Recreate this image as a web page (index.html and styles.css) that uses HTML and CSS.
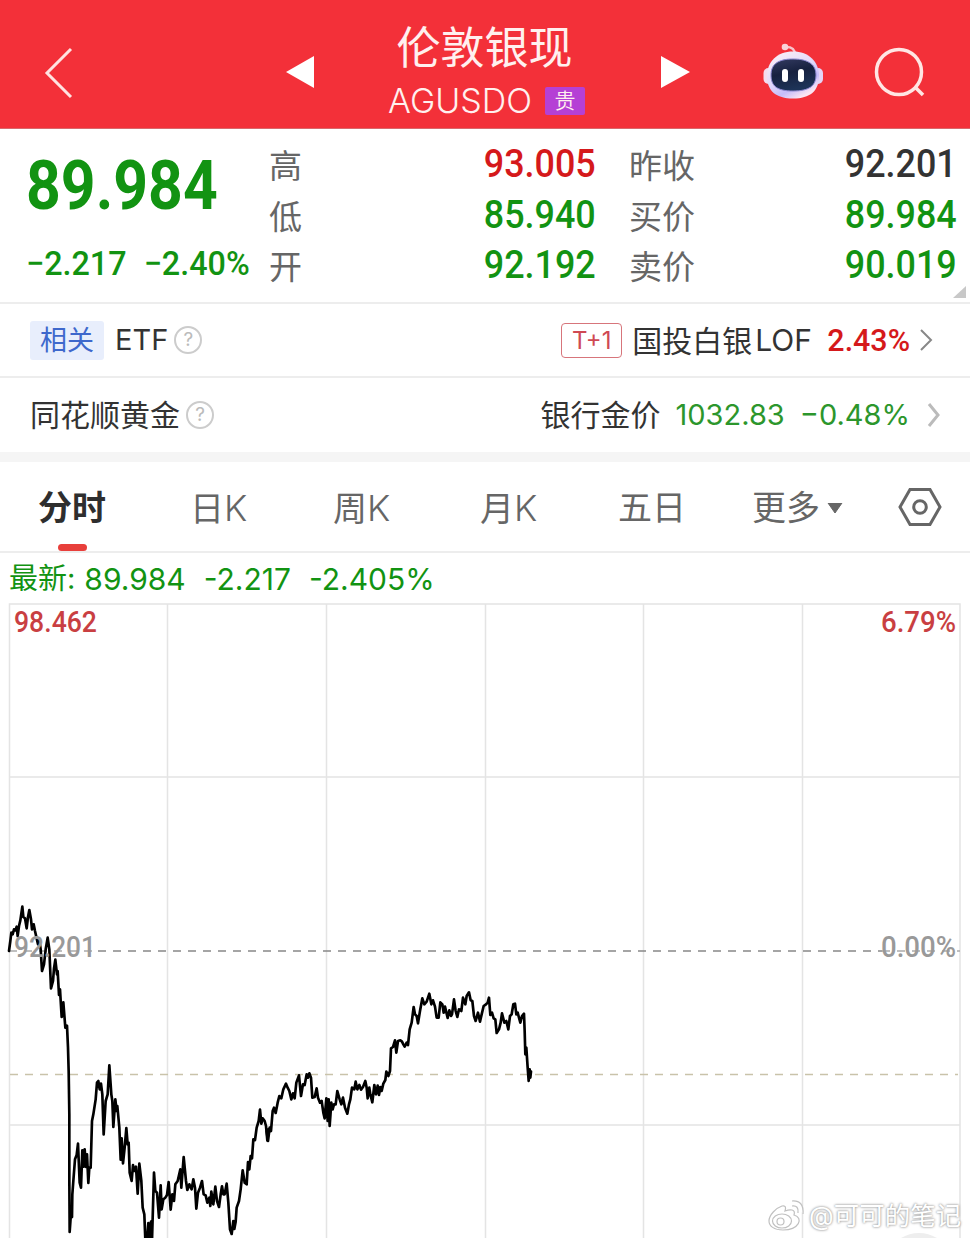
FILE: index.html
```html
<!DOCTYPE html>
<html lang="zh-CN">
<head>
    <meta charset="UTF-8">
    <title>伦敦银现 AGUSDO</title>
    <link rel="stylesheet" href="styles.css">
</head>
<body>

<header class="header">
    <svg class="back" width="30" height="52" viewBox="0 0 30 52"><path d="M27 2 L3 26 L27 50"/></svg>
    <svg class="prev" width="28" height="32" viewBox="0 0 28 32"><path d="M0 16 L28 0 V32 Z"/></svg>
    <div class="title">
        <h1>伦敦银现</h1>
        <div class="code"><span>AGUSDO</span><span class="badge">贵</span></div>
    </div>
    <svg class="next" width="29" height="32" viewBox="0 0 29 32"><path d="M0 0 L29 16 L0 32 Z"/></svg>
    <svg class="robot" width="62" height="58" viewBox="0 0 62 58">
        <defs>
            <linearGradient id="shell" x1="0" y1="0" x2="0.6" y2="1">
                <stop offset="0" stop-color="#fff2f6"/>
                <stop offset="0.55" stop-color="#e2d9fa"/>
                <stop offset="0.8" stop-color="#c5bcfa"/>
                <stop offset="1" stop-color="#fbe4f2"/>
            </linearGradient>
            <linearGradient id="visor" x1="0" y1="0" x2="0.3" y2="1">
                <stop offset="0" stop-color="#343b62"/>
                <stop offset="0.5" stop-color="#17213f"/>
                <stop offset="1" stop-color="#1d3357"/>
            </linearGradient>
        </defs>
        <path d="M23 4 C29 4 32 6 32 12" fill="none" stroke="#f7c3cc" stroke-width="2.500"/>
        <circle cx="22" cy="4" r="3.300" fill="#f9d3d9"/>
        <rect x="0.500" y="25" width="10" height="16" rx="5" fill="#f5dcee"/>
        <rect x="50" y="25" width="10" height="16" rx="5" fill="#e4d4f6"/>
        <path d="M30 8.500 C46 8.500 56 19 56 33 C56 48 47 55.500 30 55.500 C13 55.500 4 48 4 33 C4 19 14 8.500 30 8.500 Z" fill="url(#shell)"/>
        <path d="M30 16 C46 16 53 22 53 32 C53 43 46 48 30 48 C14 48 8 43 8 32 C8 22 14 16 30 16 Z" fill="url(#visor)" stroke="#8a86cf" stroke-width="1"/>
        <rect x="19" y="26" width="6" height="13" rx="3" fill="#fff"/>
        <rect x="35" y="26" width="6" height="13" rx="3" fill="#fff"/>
    </svg>
    <svg class="search" width="52" height="52" viewBox="0 0 52 52"><circle cx="25" cy="25" r="22.5"/><path d="M41 40 L49 48"/></svg>
</header>

<section class="quote">
    <div class="last">
        <div class="price num down">89.984</div>
        <div class="change down"><span class="num">−2.217</span><span class="num">−2.40%</span></div>
    </div>
    <dl class="stats first">
        <dt>高</dt><dd class="num up">93.005</dd>
        <dt>低</dt><dd class="num down">85.940</dd>
        <dt>开</dt><dd class="num down">92.192</dd>
    </dl>
    <dl class="stats second">
        <dt>昨收</dt><dd class="num">92.201</dd>
        <dt>买价</dt><dd class="num down">89.984</dd>
        <dt>卖价</dt><dd class="num down">90.019</dd>
    </dl>
    <svg class="expand" width="13" height="12" viewBox="0 0 13 12"><path d="M13 0 V12 H0 Z" fill="#c8c8c8"/></svg>
</section>

<section class="row">
    <span class="tag">相关</span>
    <span class="etf">ETF</span>
    <span class="help">?</span>
    <span class="t1">T+1</span>
    <span class="fund">国投白银</span>
    <span class="lof">LOF</span>
    <span class="num pct">2.43%</span>
    <svg class="arrow" width="14" height="24" viewBox="0 0 14 24"><path d="M2 2 L12 12 L2 22" stroke="#888" stroke-width="2"/></svg>
</section>

<section class="row gold">
    <span>同花顺黄金</span>
    <span class="help">?</span>
    <span class="bank">银行金价</span>
    <span class="gold-price">1032.83</span>
    <span class="gold-change">−0.48%</span>
    <svg class="arrow" width="14" height="26" viewBox="0 0 14 26"><path d="M2 2 L11 13 L2 24" stroke="#bbb" stroke-width="3"/></svg>
</section>

<nav class="tabs">
    <a class="active">分时</a>
    <a>日<i>K</i></a>
    <a>周<i>K</i></a>
    <a>月<i>K</i></a>
    <a>五日</a>
    <a class="more">更多<svg width="16" height="11" viewBox="0 0 16 11"><path d="M1 0 H15 L8 10 Z" fill="#666" stroke="#666"/></svg></a>
    <svg class="setting" width="44" height="40" viewBox="0 0 44 40"><path d="M12 2.500 H32 L42 20 L32 37.500 H12 L2 20 Z"/><circle cx="22" cy="20" r="6.300"/></svg>
</nav>

<div class="latest down"><span>最新:</span><span>89.984</span><span>-2.217</span><span>-2.405%</span></div>

<div class="chart">
    <svg width="970" height="637" viewBox="0 602 970 637">
        <g class="grid">
            <path d="M9.500 1240 V604 H960 V1240"/>
            <path d="M167.500 604 V1240 M326.500 604 V1240 M485.500 604 V1240 M643.500 604 V1240 M802.500 604 V1240"/>
            <path d="M9 777 H960 M9 1125 H960"/>
        </g>
        <path class="base-line" d="M98 951 H882"/>
        <path class="base-line faint" d="M9 951 H98 M882 951 H960"/>
        <path class="last-line" d="M10 1074.500 H958"/>

        <!-- price line, drawn at three units per pixel -->
        <g class="price-line" transform="translate(0 881) scale(0.33333)">
            <polyline points="27,210 31,180 34,155 38,160 42,145 46,148 50,137 53,165 57,135 61,118 67,77 70,108 75,112 80,142 84,108 88,87 93,115 96,145 101,130 105,150 110,172 114,190 118,175 122,205 126,270 132,250 137,205 143,170 148,205 153,322 159,300 162,262 166,236 171,280 173,270 177,342 180,325 185,408 190,364 196,440 201,434 204,500 206,570 208,700 208,900 209,1053 212,1010 216,1008 217,940 220,900 225,835 230,822 234,788 239,905 243,920 247,808 251,857 254,805 258,858 261,820 265,906 268,860 272,860 276,720 280,700 287,655 291,605 295,600 299,625 303,608 307,640 311,760 317,660 323,640 328,553 334,640 337,660 340,738 346,655 350,690 352,675 358,740 362,836 365,772 369,847 374,800 379,741 383,790 386,785 389,875 395,900 399,852 403,870 408,857 413,938 418,848 424,900 428,980 433,1000 436,1076 441,1080 445,1026 449,1080 453,1022 456,1080 462,875 466,930 471,935 477,1010 482,913 485,985 490,955 496,950 501,942 506,903 512,986 517,940 522,960 526,910 533,900 541,865 544,920 551,828 558,900 562,927 568,910 575,925 580,895 585,920 589,983 594,935 600,920 606,900 611,940 617,943 622,965 628,950 631,975 634,932 640,970 646,917 651,960 657,978 662,940 666,916 670,940 674,940 680,908 685,965 690,1045 695,1059 700,1020 703,1044 707,1022 710,980 717,960 722,925 728,868 734,905 740,910 744,843 748,865 752,825 756,832 760,775 765,777 770,740 776,720 780,686 784,728 788,712 794,720 798,735 802,778 806,745"/>
            <polyline transform="translate(780 240)" points="20,510 24,540 29,500 33,510 38,450 42,440 47,456 53,425 58,405 64,412 70,385 78,368 83,380 88,390 94,415 99,397 104,412 109,365 117,343 123,405 129,370 134,372 140,340 144,350 148,337 153,350 157,410 164,408 170,382 174,410 180,425 185,420 190,455 194,472 199,412 203,480 206,415 209,495 214,425 218,445 222,430 227,430 232,390 239,415 244,430 249,410 255,440 262,458 267,430 271,415 276,380 283,385 287,362 292,385 298,372 303,386 309,378 316,360 320,380 323,412 328,380 331,400 337,424 343,372 348,400 353,374 357,402 361,378 365,390 370,368 376,357 379,332 385,345 390,330 393,262 399,258 405,238 409,275 414,240 421,238 426,242 430,250 434,257 440,245 444,252 449,205 455,185 461,138 465,160 470,165 474,187 480,150 487,112 493,130 500,122 508,98 514,130 519,118 525,137 530,170 536,170 541,124 547,130 551,155 555,137 563,171 568,148 573,165 576,160 582,115 587,150 592,168 597,145 604,150 609,110 616,130 620,105 627,94 632,118 637,120 642,165 647,180 654,155 660,182 665,160 671,135 678,130 683,125 687,110 691,162 696,155 701,172 706,175 710,216 717,205 722,185 726,157 733,185 739,180 745,205 750,165 755,160 760,130 765,128 769,160 773,155 781,185 786,165 792,158 794,210 796,280 799,260 803,320 806,360 809,325 811,350 813,332"/>
        </g>

        <text class="limit" x="14" y="632" textLength="83" lengthAdjust="spacingAndGlyphs">98.462</text>
        <text class="limit" x="881" y="632" textLength="75" lengthAdjust="spacingAndGlyphs">6.79%</text>
        <text class="middle" x="14" y="957" textLength="82" lengthAdjust="spacingAndGlyphs">92.201</text>
        <text class="middle" x="881" y="957" textLength="75" lengthAdjust="spacingAndGlyphs">0.00%</text>
        <ellipse cx="919" cy="1248" rx="24" ry="15" fill="#eee"/>
    </svg>
    <div class="watermark">
        <svg width="40" height="34" viewBox="0 0 40 34">
            <path d="M3 22 C3 16 10 9 16 7 C20 6 20 9 19 12 C24 10 30 10 28 16 C38 19 33 31 17 31 C8 31 3 27 3 22 Z"/>
            <ellipse cx="16" cy="22" rx="9.500" ry="7"/>
            <circle cx="14.500" cy="22.500" r="3.500"/>
            <path d="M26 7 Q33 6 32 14 M26 2 Q38 1 37 15"/>
        </svg>
        <span>@可可的笔记</span>
    </div>
</div>

</body>
</html>
```
FILE: styles.css
```css
* {
    box-sizing: border-box;
}
body {
    margin: 0;
    width: 970px;
    height: 1238px;
    overflow: hidden;
    background: #fff;
    color: #333;
    font-family: Inter, "Noto Sans CJK SC", sans-serif;
}
.header {
    display: flex;
    height: 129px;
    background: #f33039;
    border-bottom: 1px solid #d9686c;
    color: #fff0ef;
}
.header svg {
    flex: none;
}
.back {
    margin: 47px 0 0 44px;
    fill: none;
    stroke: #ffe3e1;
    stroke-width: 3;
}
.prev {
    margin: 56px 0 0 212px;
    fill: #fff;
}
.title {
    width: 347px;
    padding-right: 2px;
    display: flex;
    flex-direction: column;
    align-items: center;
}
.title h1 {
    margin: 21px 4px 0 0;
    font-size: 44px;
    line-height: 54px;
    font-weight: 400;
}
.code {
    display: flex;
    align-items: center;
    gap: 13px;
    margin-top: 7px;
    font-size: 34px;
    line-height: 38px;
    font-weight: 350;
}
.badge {
    width: 40px;
    height: 28px;
    background: #b540d5;
    border-radius: 2px;
    font-size: 21px;
    line-height: 27px;
    text-align: center;
}
.next {
    margin: 56px 0 0;
    fill: #fff;
}
.robot {
    margin: 43px 0 0 73px;
}
.search {
    margin: 47px 0 0 49px;
    fill: none;
    stroke: #ffe6e4;
    stroke-width: 3.5;
}
.num {
    font-family: Roboto, sans-serif;
    font-weight: 500;
    white-space: nowrap;
}
.up {
    color: #d5191b;
}
.down {
    color: #129312;
}
.quote {
    position: relative;
    display: flex;
    height: 175px;
    border-bottom: 2px solid #ededed;
}
.last {
    width: 270px;
    padding: 17px 0 0 26px;
}
.price {
    font-size: 69px;
    line-height: 80px;
    font-weight: 700;
    transform: scaleX(0.88);
    transform-origin: left;
}
.change {
    display: flex;
    gap: 18px;
    margin-top: 15px;
    font-size: 34px;
    line-height: 44px;
    transform: scaleX(0.95);
    transform-origin: left;
}
.stats {
    display: grid;
    grid-template-columns: auto auto;
    justify-content: space-between;
    grid-auto-rows: 50.500px;
    margin: 10px 0 0;
    line-height: 50px;
}
.stats dt {
    padding-top: 2px;
    font-size: 33px;
    font-weight: 400;
    color: #666;
}
.stats dd {
    margin: 0;
    font-size: 39px;
    text-align: right;
    transform: scaleX(0.92);
    transform-origin: right;
}
.first {
    width: 327px;
    margin-left: -1px;
}
.second {
    width: 328px;
    margin-left: 33px;
}
.expand {
    position: absolute;
    right: 4px;
    bottom: 4px;
}
.row {
    display: flex;
    align-items: center;
    height: 74px;
    padding: 0 37px 0 30px;
    border-bottom: 2px solid #ededed;
    font-size: 30px;
    line-height: 40px;
    white-space: nowrap;
}
.row .arrow {
    flex: none;
    fill: none;
}
.tag {
    width: 74px;
    height: 39px;
    background: #e8eefc;
    border-radius: 3px;
    color: #3e68cc;
    font-size: 27px;
    line-height: 39px;
    text-align: center;
}
.etf {
    margin-left: 11px;
    font-size: 29px;
}
.help {
    width: 28px;
    height: 28px;
    margin-left: 6px;
    border: 2px solid #ccc;
    border-radius: 50%;
    color: #bbb;
    font-size: 19px;
    line-height: 24px;
    text-align: center;
}
.t1 {
    width: 61px;
    height: 35px;
    margin-left: auto;
    border: 1px solid #d7757b;
    border-radius: 4px;
    color: #cf4953;
    font-size: 24px;
    line-height: 34px;
    text-align: center;
}
.fund {
    margin-left: 10px;
    padding-top: 2px;
}
.lof {
    margin-left: 3px;
}
.pct {
    margin: 0 9px 0 11px;
    color: #d5191b;
    font-size: 32px;
    transform: scaleX(0.95);
    transform-origin: right;
}
.gold {
    height: 84px;
    padding-right: 29px;
    border-bottom: 10px solid #f5f5f5;
}
.bank {
    margin-left: auto;
}
.gold-price {
    margin-left: 15px;
    color: #2c962c;
    font-size: 29px;
}
.gold-change {
    margin: 0 17px 0 15px;
    color: #2c962c;
    font-size: 29px;
}
.tabs {
    display: grid;
    grid-template-columns: 152px 143px 147px 138px 134px auto auto;
    align-items: center;
    height: 91px;
    padding: 0 28px 0 38px;
    border-bottom: 2px solid #ededed;
    color: #666;
    font-size: 34px;
    font-weight: 400;
    line-height: 44px;
}
.tabs i {
    font-style: normal;
    font-weight: 300;
    font-size: 36px;
}
.tabs a {
    padding-top: 3px;
    white-space: nowrap;
}
.tabs .active {
    position: relative;
    color: #2e2e2e;
    font-weight: 700;
}
.active::after {
    content: "";
    position: absolute;
    left: 20px;
    bottom: -21px;
    width: 29px;
    height: 7px;
    border-radius: 4px;
    background: #e83f3b;
}
.tabs .more {
    display: flex;
    align-items: center;
    gap: 7px;
}
.setting {
    justify-self: end;
    fill: none;
    stroke: #666;
    stroke-width: 3;
}
.latest {
    display: flex;
    height: 49px;
    padding: 5px 0 0 9px;
    font-size: 30px;
    line-height: 42px;
}
.latest span {
    margin-right: 18px;
}
.latest span:first-child {
    margin-right: 9px;
    font-size: 29px;
}
.chart {
    position: relative;
    height: 637px;
}
.chart > svg {
    display: block;
}
.grid path {
    fill: none;
    stroke: #e4e4e4;
    stroke-width: 1.5;
}
.base-line {
    stroke: #888;
    stroke-width: 1.5;
    stroke-dasharray: 8 7;
}
.faint {
    stroke: #aaa;
}
.last-line {
    stroke: #c9c3aa;
    stroke-width: 1.5;
    stroke-dasharray: 8 7;
}
.price-line {
    fill: none;
    stroke: #000;
    stroke-width: 8;
    stroke-linejoin: round;
    stroke-linecap: round;
}
.limit,
.middle {
    font-family: Roboto, sans-serif;
    font-size: 29px;
    font-weight: 500;
    fill: #c93f42;
}
.middle {
    fill: #999;
}
.watermark {
    position: absolute;
    left: 766px;
    top: 594px;
    display: flex;
    align-items: center;
    gap: 3px;
    color: #fff;
    font-size: 25.500px;
    line-height: 40px;
    white-space: nowrap;
    text-shadow: 0 0 2px #999, 0 0 3px #aaa;
}
.watermark svg {
    fill: #fff;
    stroke: #c0c0c0;
    stroke-width: 1.2;
}
```
